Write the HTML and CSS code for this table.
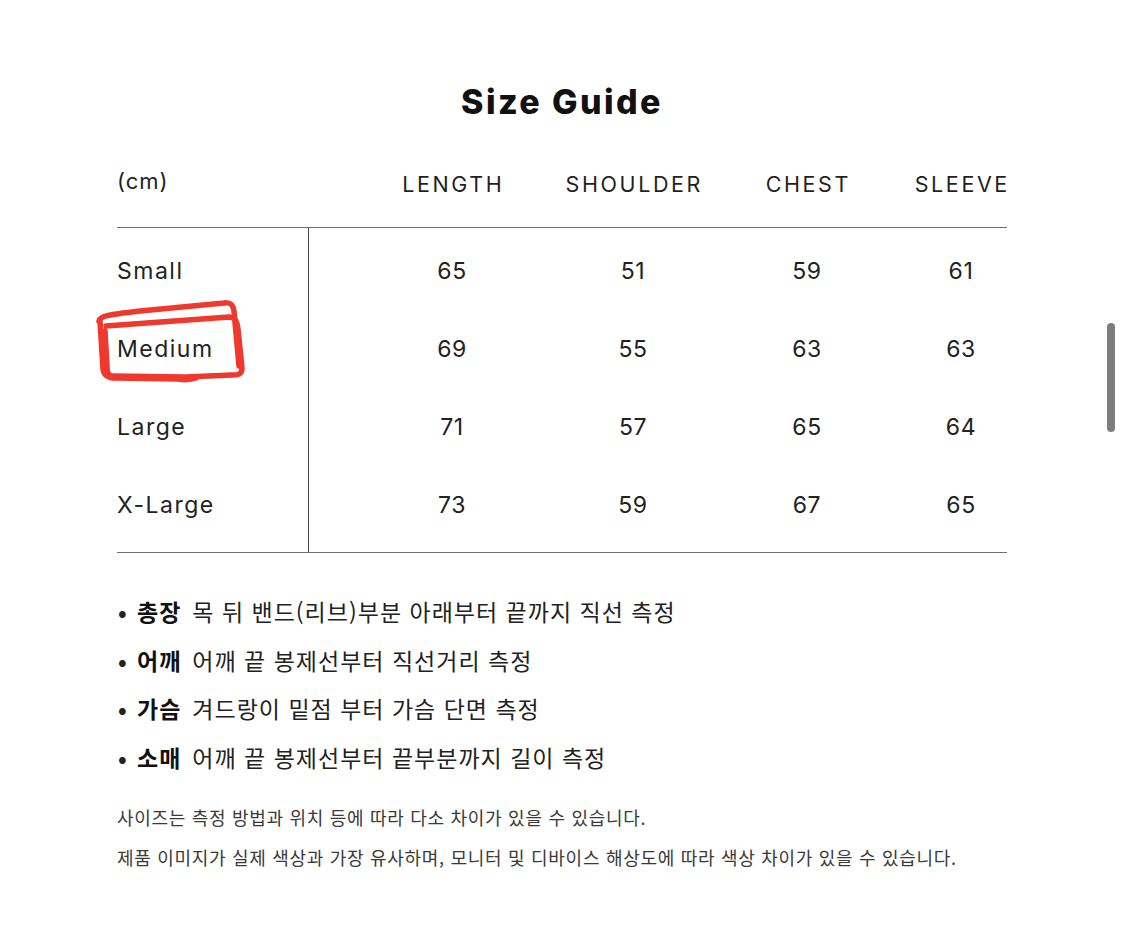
FILE: index.html
```html
<!DOCTYPE html>
<html lang="ko">
<head>
<meta charset="utf-8">
<title>Size Guide</title>
<link rel="stylesheet" href="styles.css">
</head>
<body>
<div class="page">
  <h1 class="title">Size Guide</h1>
  <div class="table">
    <div class="thead">
      <div class="unit">(cm)</div>
      <div class="cols head-cols">
        <div>LENGTH</div>
        <div>SHOULDER</div>
        <div>CHEST</div>
        <div>SLEEVE</div>
      </div>
    </div>
    <div class="tbody">
      <div class="labels">
        <div class="row-label">Small</div>
        <div class="row-label marked">Medium
          <svg class="mark" viewBox="95 298 155 87" width="155" height="87" aria-hidden="true">
            <path d="M99 321 C100 316 106 315 140 311 L224 303 C231 302 233 305 234 311 L239 366"/>
            <path d="M106 326 L229 317 C235 317 237 321 238 329 L242 368 C242 374 239 375 232 375 L185 377 L112 376 C108 376 107 372 107 366 L105 331"/>
            <path d="M100 321 L103 369 C104 376 108 378 116 378 L178 379 C184 380 190 380 196 378"/>
          </svg>
        </div>
        <div class="row-label">Large</div>
        <div class="row-label">X-Large</div>
      </div>
      <div class="cols data-cols">
        <div>65</div><div>51</div><div>59</div><div>61</div>
        <div>69</div><div>55</div><div>63</div><div>63</div>
        <div>71</div><div>57</div><div>65</div><div>64</div>
        <div>73</div><div>59</div><div>67</div><div>65</div>
      </div>
    </div>
  </div>

  <ul class="notes">
    <li><span class="dot">•</span><b>총장</b><span class="desc">목 뒤 밴드(리브)부분 아래부터 끝까지 직선 측정</span></li>
    <li><span class="dot">•</span><b>어깨</b><span class="desc">어깨 끝 봉제선부터 직선거리 측정</span></li>
    <li><span class="dot">•</span><b>가슴</b><span class="desc">겨드랑이 밑점 부터 가슴 단면 측정</span></li>
    <li><span class="dot">•</span><b>소매</b><span class="desc">어깨 끝 봉제선부터 끝부분까지 길이 측정</span></li>
  </ul>

  <div class="footnote">
    <p>사이즈는 측정 방법과 위치 등에 따라 다소 차이가 있을 수 있습니다.</p>
    <p>제품 이미지가 실제 색상과 가장 유사하며, 모니터 및 디바이스 해상도에 따라 색상 차이가 있을 수 있습니다.</p>
  </div>
</div>
<div class="scrollbar"></div>
</body>
</html>
```

FILE: styles.css
```css
* { box-sizing: border-box; }
html, body { margin: 0; padding: 0; background: #ffffff; }
body {
  font-family: Inter, "Noto Sans", "Noto Sans CJK KR", sans-serif;
  color: #1c1c1c;
  width: 1125px;
  height: 927px;
  overflow: hidden;
}
.page {
  width: 890px;
  margin-left: 117px;
  padding-top: 82px;
}
.title {
  margin: 0;
  height: 40px;
  line-height: 40px;
  text-align: center;
  font-size: 34px;
  font-weight: 800;
  letter-spacing: 2.4px;
  color: #111;
}
.table { width: 890px; }
.thead {
  display: flex;
  align-items: flex-end;
  height: 105px;
  padding-bottom: 30px;
}
.unit {
  width: 192px;
  flex: none;
  font-size: 22px;
  line-height: 25px;
  padding-bottom: 3px;
  letter-spacing: 1px;
  color: #222;
}
.cols {
  flex: 1;
  display: grid;
  grid-template-columns: 180px 182px 166px 142px;
  padding-left: 53px;
  justify-items: center;
  text-align: center;
}
.head-cols > div {
  font-size: 21.5px;
  line-height: 25px;
  letter-spacing: 2.6px;
  margin-right: -2.6px;
  white-space: nowrap;
  color: #1f1f1f;
}
.tbody {
  display: flex;
  border-top: 1px solid #6e6e6e;
  border-bottom: 1px solid #6e6e6e;
}
.labels {
  width: 192px;
  flex: none;
  border-right: 1px solid #4a4a4a;
  padding: 4px 0 8px;
}
.row-label {
  height: 78px;
  line-height: 78px;
  font-size: 23px;
  letter-spacing: 1.5px;
  color: #222;
}
.marked { position: relative; }
.mark {
  position: absolute;
  left: -22px;
  top: -12px;
  overflow: visible;
}
.mark path {
  fill: none;
  stroke: #ee3a2e;
  stroke-width: 5.5;
  stroke-linecap: round;
  stroke-linejoin: round;
}
.data-cols {
  grid-auto-rows: 78px;
  align-items: center;
  padding-top: 4px;
  padding-bottom: 8px;
}
.data-cols > div {
  font-size: 23px;
  letter-spacing: 0.6px;
  color: #222;
}
.notes {
  list-style: none;
  margin: 34px 0 0;
  padding: 0;
  font-family: "Noto Sans CJK KR", sans-serif;
  font-size: 23px;
  color: #222;
}
.notes li {
  height: 48.5px;
  line-height: 48.5px;
  display: flex;
  white-space: nowrap;
}
.dot {
  font-weight: 700;
  width: 20px;
  padding-left: 1px;
}
.notes b {
  font-weight: 700;
  color: #111;
  letter-spacing: 1px;
  margin-right: 11px;
}
.desc { letter-spacing: 1px; }
.footnote {
  margin-top: 16px;
  font-family: "Noto Sans CJK KR", sans-serif;
  font-size: 18px;
  color: #3a3a3a;
}
.footnote p {
  margin: 0;
  height: 40px;
  line-height: 40px;
  white-space: nowrap;
  letter-spacing: 0.7px;
}
.scrollbar {
  position: absolute;
  left: 1107px;
  top: 323px;
  width: 8px;
  height: 109px;
  border-radius: 4px;
  background: #7d7d7d;
}
```
